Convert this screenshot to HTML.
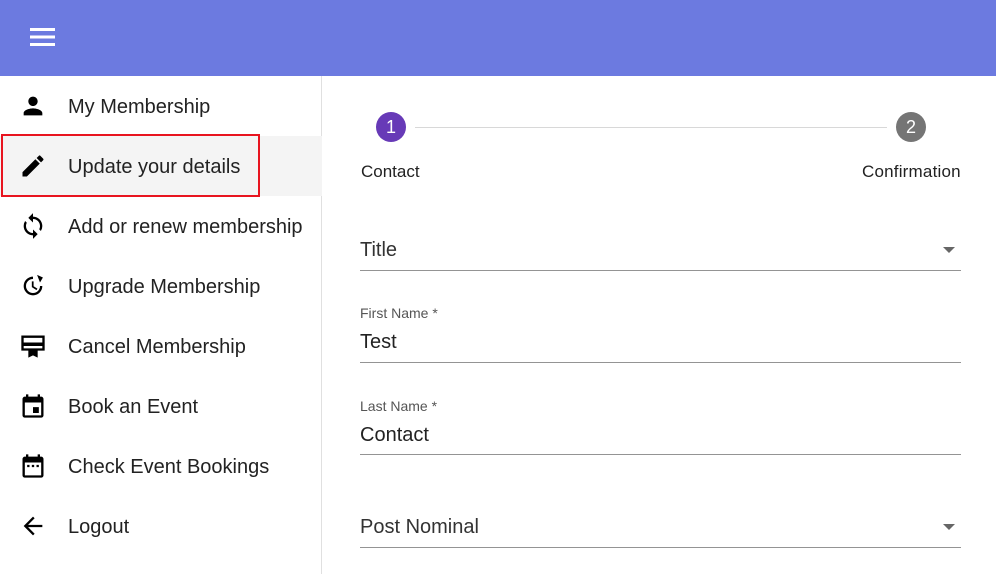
<!DOCTYPE html>
<html><head><style>
*{margin:0;padding:0;box-sizing:border-box}
body{width:996px;height:574px;overflow:hidden;font-family:"Liberation Sans",sans-serif;background:#fff;position:relative;color:#222}
.hdr{position:absolute;left:0;top:0;width:996px;height:76px;background:#6c7ae0}
.side{position:absolute;left:0;top:76px;width:322px;height:498px;border-right:1px solid #e0e0e0}
.item{position:absolute;left:0;width:322px;height:60px}
.item span{position:absolute;left:68px;top:20px;font-size:20px;color:#222}
.item svg{position:absolute;left:19px;top:16px;width:28px;height:28px}
.a{position:absolute}
.lbl{font-size:14px;color:#555}
.val{font-size:20px;color:#222}
.line{position:absolute;left:360px;width:601px;height:1px;background:#949494}
.arr{position:absolute;left:943px;width:0;height:0;border-left:6px solid transparent;border-right:6px solid transparent;border-top:6px solid #666}
</style></head><body>
<div class="hdr"><svg class="a" style="left:30px;top:26px" width="25" height="22" viewBox="0 0 25 22"><rect y="2" width="25" height="3" fill="#fff"/><rect y="9.5" width="25" height="3" fill="#fff"/><rect y="17" width="25" height="3" fill="#fff"/></svg></div>
<div class="side">
<div class="item" style="top:0"><svg viewBox="0 0 24 24"><path d="M12 12c2.2 0 4-1.8 4-4s-1.8-4-4-4-4 1.8-4 4 1.8 4 4 4zm0 2c-2.7 0-8 1.3-8 4v2h16v-2c0-2.7-5.3-4-8-4z"/></svg><span>My Membership</span></div>
<div class="item" style="top:60px;background:#f4f4f4"><svg viewBox="0 0 24 24"><path d="M3 17.25V21h3.75L17.8 9.94l-3.75-3.75L3 17.25zM20.7 7.04a1 1 0 000-1.41l-2.34-2.34a1 1 0 00-1.41 0l-1.83 1.83 3.75 3.75 1.83-1.83z"/></svg><span>Update your details</span></div>
<div class="a" style="left:1px;top:58px;width:259px;height:63px;border:2px solid #e8141f"></div>
<div class="item" style="top:120px"><svg viewBox="0 0 24 24"><path d="M12 4V1L8 5l4 4V6c3.3 0 6 2.7 6 6 0 1-.25 2-.7 2.8l1.46 1.46A8 8 0 0020 12c0-4.4-3.6-8-8-8zm0 14c-3.3 0-6-2.7-6-6 0-1 .25-2 .7-2.8L5.24 7.74A8 8 0 004 12c0 4.4 3.6 8 8 8v3l4-4-4-4v3z"/></svg><span>Add or renew membership</span></div>
<div class="item" style="top:180px"><svg viewBox="0 0 24 24"><path d="M12 4a8 8 0 108 8h-2a6 6 0 11-6-6zm-1 4v5l4 2.5.8-1.3-3.3-2V8zM15.5 2.5l5 2.2-2.5 4.3z" /></svg><span>Upgrade Membership</span></div>
<div class="item" style="top:240px"><svg viewBox="0 0 24 24"><path d="M2 3h20v13H2zM4 5v4h16V5zm0 7v2h16v-2zM8 16h8v6l-4-2-4 2z"/></svg><span>Cancel Membership</span></div>
<div class="item" style="top:300px"><svg viewBox="0 0 24 24"><path d="M19 4h-1V2h-2v2H8V2H6v2H5a2 2 0 00-2 2v14a2 2 0 002 2h14a2 2 0 002-2V6a2 2 0 00-2-2zm0 16H5V9h14zM12 13h5v5h-5z"/></svg><span>Book an Event</span></div>
<div class="item" style="top:360px"><svg viewBox="0 0 24 24"><path d="M19 4h-1V2h-2v2H8V2H6v2H5a2 2 0 00-2 2v14a2 2 0 002 2h14a2 2 0 002-2V6a2 2 0 00-2-2zm0 16H5V9h14zM7 11h2v2H7zm4 0h2v2h-2zm4 0h2v2h-2z"/></svg><span>Check Event Bookings</span></div>
<div class="item" style="top:420px"><svg viewBox="0 0 24 24"><path d="M20 11H7.8l5.6-5.6L12 4l-8 8 8 8 1.4-1.4L7.8 13H20z"/></svg><span>Logout</span></div>
</div>
<div class="a" style="left:415px;top:127px;width:472px;height:1px;background:#d8d8d8"></div>
<div class="a" style="left:376px;top:112px;width:30px;height:30px;border-radius:50%;background:#673ab7;color:#fff;font-size:18px;text-align:center;line-height:30px">1</div>
<div class="a" style="left:896px;top:112px;width:30px;height:30px;border-radius:50%;background:#757575;color:#fff;font-size:18px;text-align:center;line-height:30px">2</div>
<div class="a" style="left:361px;top:162px;font-size:17px">Contact</div>
<div class="a" style="left:862px;top:162px;font-size:17px;letter-spacing:0.2px">Confirmation</div>
<div class="a val" style="left:360px;top:239px;color:#333">Title</div><div class="arr" style="top:247px"></div><div class="line" style="top:270px"></div>
<div class="a lbl" style="left:360px;top:305px">First Name *</div><div class="a val" style="left:360px;top:331px">Test</div><div class="line" style="top:362px"></div>
<div class="a lbl" style="left:360px;top:398px">Last Name *</div><div class="a val" style="left:360px;top:424px">Contact</div><div class="line" style="top:454px"></div>
<div class="a val" style="left:360px;top:516px;color:#333">Post Nominal</div><div class="arr" style="top:524px"></div><div class="line" style="top:547px"></div>
</body></html>
